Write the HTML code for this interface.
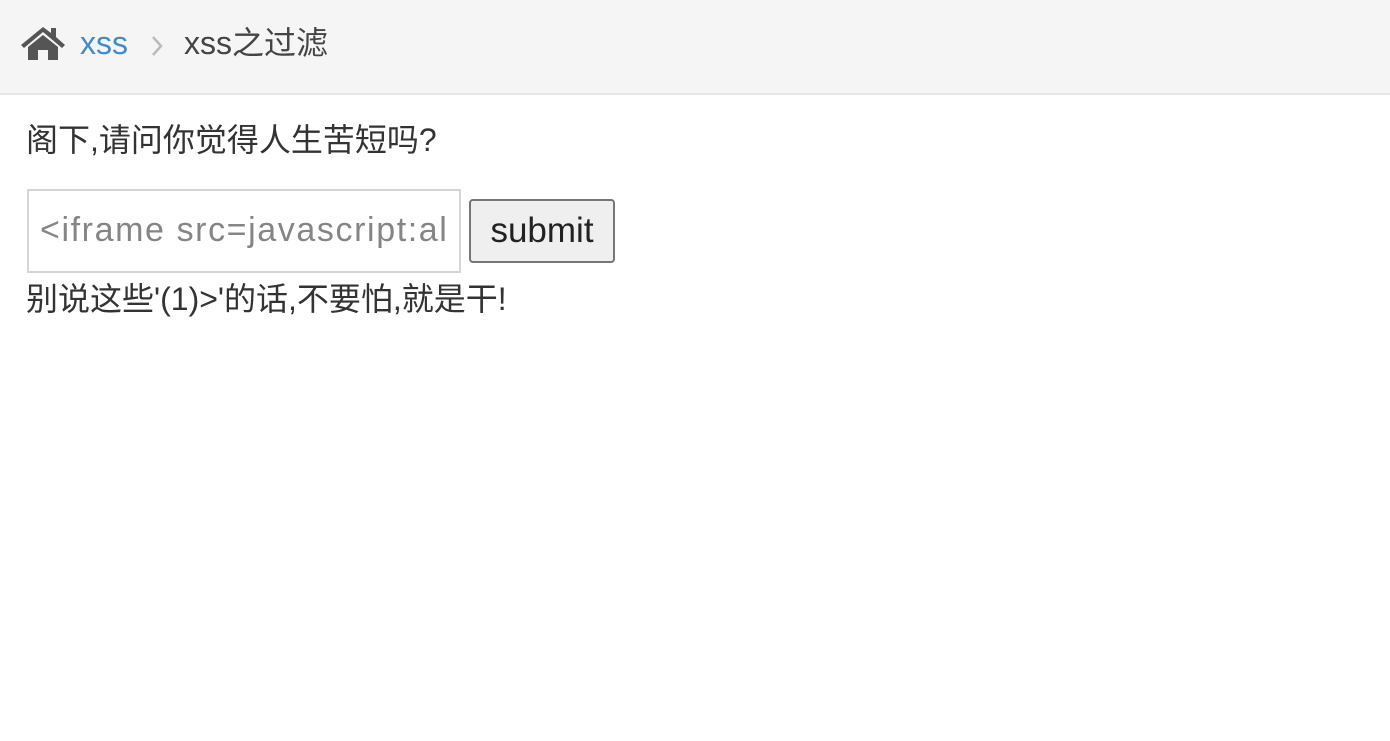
<!DOCTYPE html>
<html><head><meta charset="utf-8"><style>
body{margin:0;background:#fff;font-family:"Liberation Sans","Noto Sans CJK SC",sans-serif;color:#333;}
.bar{position:absolute;left:0;top:0;width:1390px;height:93px;background:#f5f5f5;border-bottom:2px solid #e5e5e5;}
.bar span{position:absolute;top:23px;font-size:32px;line-height:40px;}
.t{position:absolute;left:26px;font-size:32px;line-height:40px;white-space:nowrap;}
.inp{position:absolute;left:27px;top:189px;height:80px;border:2px solid #d5d5d5;width:430px;}
.inp span{position:absolute;left:11px;top:19px;font-size:34px;letter-spacing:1.6px;color:#858585;white-space:nowrap;overflow:hidden;width:410px;line-height:40px;}
.btn{position:absolute;left:469px;top:199px;width:142px;height:60px;border:2px solid #767676;border-radius:4px;background:#efefef;font-size:35px;text-align:center;line-height:60px;color:#222;}
</style></head><body>
<div class="bar">
<svg style="position:absolute;left:20px;top:25px" width="46" height="36" viewBox="0 0 46 36"><path d="M23 2 L1 20 L4 23 L23 7 L42 23 L45 20 L36 12 L36 3 L31 3 L31 8 Z" fill="#555"/><path d="M8 22 L23 10 L38 22 L38 35 L28 35 L28 25 L18 25 L18 35 L8 35 Z" fill="#555"/></svg>
<span style="left:80px;color:#428bca;font-size:32px">xss</span>
<svg style="position:absolute;left:150px;top:35px" width="14" height="22" viewBox="0 0 14 22"><path d="M3 2 L11 11 L3 20" stroke="#bbb" stroke-width="2.5" fill="none"/></svg>
<span style="left:184px;color:#444">xss之过滤</span>
</div>
<div class="t" style="top:120px">阁下,请问你觉得人生苦短吗?</div>
<div class="inp"><span>&lt;iframe src=javascript:alert</span></div>
<div class="btn">submit</div>
<div class="t" style="top:279px">别说这些'(1)&gt;'的话,不要怕,就是干!</div>
</body></html>
